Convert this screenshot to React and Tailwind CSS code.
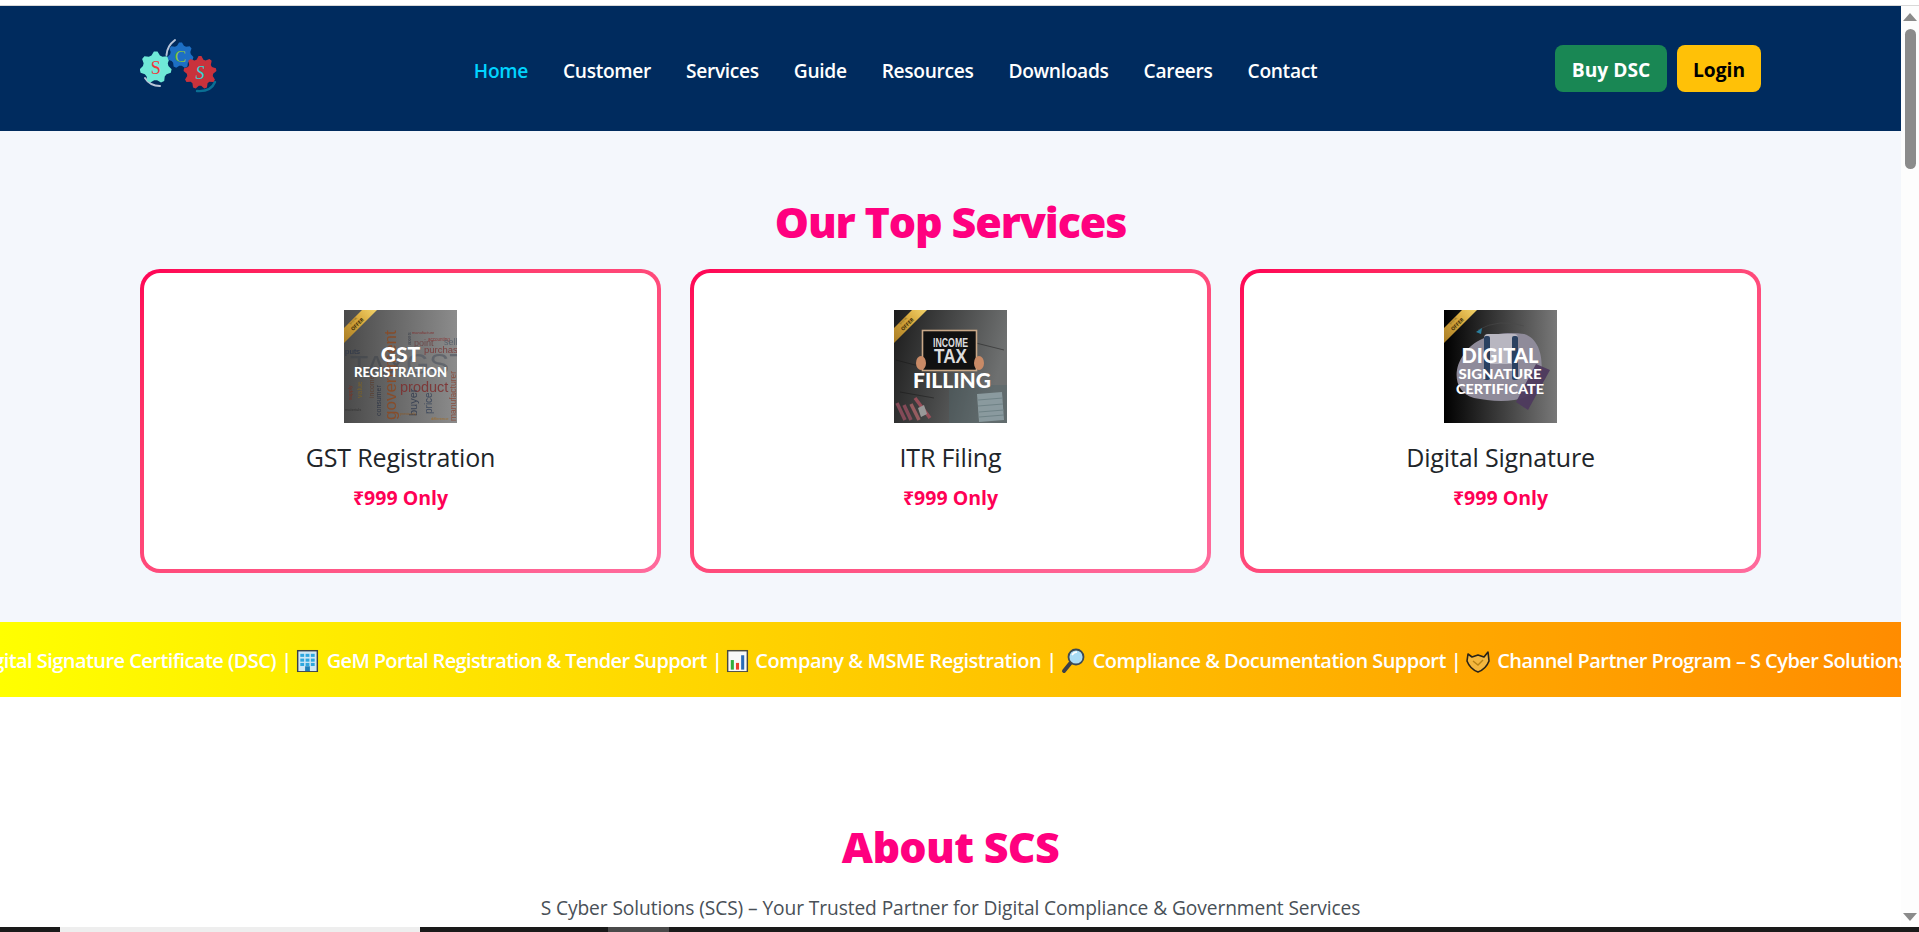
import React from "react";

const NAV = ["Home", "Customer", "Services", "Guide", "Resources", "Downloads", "Careers", "Contact"];
const UI = "font-['Open_Sans','Noto_Sans',sans-serif]";

function gear(cx, cy, r, teeth) {
  const pts = [];
  const steps = teeth * 4;
  for (let i = 0; i < steps; i++) {
    const a = (i / steps) * Math.PI * 2 - Math.PI / 2 - Math.PI / steps;
    const rad = i % 4 === 0 || i % 4 === 1 ? r : r * 0.8;
    pts.push(`${(cx + rad * Math.cos(a)).toFixed(2)},${(cy + rad * Math.sin(a)).toFixed(2)}`);
  }
  return pts.join(" ");
}

function Logo() {
  return (
    <svg viewBox="0 0 96 80" className="w-[96px] h-[80px] shrink-0">
      <path d="M35 11 Q27 17 26.5 26" fill="none" stroke="#b9c5d9" strokeWidth="2" strokeLinecap="round" />
      <path d="M5 49 Q10 57 20 57" fill="none" stroke="#b9c5d9" strokeWidth="2" strokeLinecap="round" />
      <path d="M57 62 Q71 63 75 53" fill="none" stroke="#0a6f94" strokeWidth="2.4" strokeLinecap="round" />
      <polygon points={gear(15.7, 38.5, 16, 7)} fill="#6fe9d7" />
      <polygon points={gear(40.5, 26.5, 13, 7)} fill="#1d6fc4" />
      <polygon points={gear(60, 43.5, 16.5, 9)} fill="#c9323c" />
      <text x="15.7" y="44.5" textAnchor="middle" fontSize="18" fill="#f0383c" fontFamily="Liberation Serif, serif">S</text>
      <text x="40.5" y="32.5" textAnchor="middle" fontSize="17" fill="#86c440" fontFamily="Liberation Serif, serif">C</text>
      <text x="60" y="50" textAnchor="middle" fontSize="18" fontStyle="italic" fill="#35d2d2" fontFamily="Liberation Serif, serif">S</text>
    </svg>
  );
}

function Ribbon({ id }) {
  return (
    <g>
      <defs>
        <linearGradient id={id} x1="0" y1="1" x2="1" y2="0">
          <stop offset="0" stopColor="#a87c24" />
          <stop offset="0.6" stopColor="#d9aa3e" />
          <stop offset="1" stopColor="#f2d36c" />
        </linearGradient>
      </defs>
      <polygon points="0,18 18,0 33,0 0,33" fill={`url(#${id})`} />
      <text transform="translate(14.5 15.5) rotate(-45)" textAnchor="middle" fontSize="5" fontWeight="700" fill="#3a2c08" fontFamily="Open Sans, sans-serif">OFFER</text>
      <text transform="translate(10 11.5) rotate(-45)" textAnchor="middle" fontSize="2.6" fill="#5a4510" fontFamily="Open Sans, sans-serif">SPECIAL</text>
    </g>
  );
}

function GstPic() {
  const words = [
    ["government", 52, 110, 17, "#8b4a24", -90],
    ["product", 56, 82, 14.5, "#7d3232", 0],
    ["purchase", 80, 43, 9.5, "#7a3a3a", 0],
    ["point", 70, 36, 9, "#6c4545", 0],
    ["puts", 1, 44, 8, "#2a3448", 0],
    ["buyer", 73, 106, 11, "#333c50", -90],
    ["price", 88, 104, 10, "#38445a", -90],
    ["manufacturer", 112, 111, 8.5, "#8a4a3a", -90],
    ["consumer", 37, 106, 7, "#2b3344", -90],
    ["income", 30, 88, 7, "#5b3d2d", -90],
    ["value", 18, 88, 7, "#7d6428", -90],
    ["supply", 8, 90, 5, "#7d3020", -90],
    ["accounting", 84, 31, 4.5, "#8a3030", 0],
    ["manufacture", 68, 24, 4, "#802d2d", 0],
    ["sell", 100, 35, 9, "#555e6a", 0],
    ["axes", 67, 35, 6, "#3a3f4a", -90],
    ["previously", 56, 105, 3.6, "#8d5a24", 0],
    ["difference", 87, 110, 4, "#a06a24", 0],
    ["materials", 1, 101, 4, "#333", 0],
  ];
  return (
    <svg viewBox="0 0 113 113" className="w-[113px] h-[113px] block">
      <defs>
        <linearGradient id="g1" x1="0" x2="1" y1="0" y2="0">
          <stop offset="0" stopColor="#4a4a4a" />
          <stop offset="1" stopColor="#8c8c8c" />
        </linearGradient>
      </defs>
      <rect width="113" height="113" fill="url(#g1)" />
      <g className="blur-[0.4px]" fontFamily="Liberation Sans, sans-serif">
        <text x="6" y="66" fontSize="30" fill="#3f444c" opacity="0.55">TAX</text>
        <text x="62" y="64" fontSize="30" fill="#555b64" opacity="0.7">GST</text>
        {words.map(([w, x, y, s, c, r]) => (
          <text key={w} x={x} y={y} fontSize={s} fill={c} opacity="0.9" transform={r ? `rotate(${r} ${x} ${y})` : undefined}>{w}</text>
        ))}
      </g>
      <Ribbon id="r1" />
      <g fill="#fff" fontFamily="Lato, sans-serif" fontWeight="900" textAnchor="middle">
        <text x="56.5" y="52" fontSize="21">GST</text>
        <text x="56.5" y="67" fontSize="14" textLength="93" lengthAdjust="spacingAndGlyphs">REGISTRATION</text>
      </g>
    </svg>
  );
}

function ItrPic() {
  return (
    <svg viewBox="0 0 113 113" className="w-[113px] h-[113px] block">
      <defs>
        <linearGradient id="g2" x1="0" x2="1" y1="0" y2="0.25">
          <stop offset="0" stopColor="#1c1c1c" />
          <stop offset="1" stopColor="#6e7070" />
        </linearGradient>
      </defs>
      <rect width="113" height="113" fill="url(#g2)" />
      <rect x="55" y="75" width="58" height="38" fill="#4e6468" opacity="0.4" />
      <g stroke="#141414" strokeWidth="1" opacity="0.45">
        <path d="M2 50 L40 60" />
        <path d="M6 82 L40 88" />
        <path d="M70 30 L110 40" />
      </g>
      <Ribbon id="r2" />
      <rect x="28.5" y="20.5" width="54" height="40" fill="#111" stroke="#c9a888" strokeWidth="1.6" />
      <ellipse cx="27" cy="53" rx="5" ry="7" fill="#c98a66" />
      <ellipse cx="85" cy="53" rx="5" ry="7" fill="#c98a66" />
      <g fill="#ddd" fontFamily="Liberation Sans, sans-serif" fontWeight="700" textAnchor="middle">
        <text x="56.5" y="37" fontSize="12" textLength="35" lengthAdjust="spacingAndGlyphs">INCOME</text>
        <text x="56.5" y="53" fontSize="19.5" textLength="33" lengthAdjust="spacingAndGlyphs">TAX</text>
      </g>
      <text x="58" y="78" fill="#fff" textAnchor="middle" fontSize="21" fontWeight="900" fontFamily="Lato, sans-serif" textLength="78" lengthAdjust="spacingAndGlyphs">FILLING</text>
      <g strokeWidth="3.5" opacity="0.9">
        <path d="M3 93 L11 110" stroke="#8d4d5c" />
        <path d="M10 95 L17 110" stroke="#8d4d5c" />
        <path d="M17 94 L25 110" stroke="#a06064" />
        <path d="M21 88 L36 108" stroke="#a0505c" />
      </g>
      <polygon points="24,98 30,95 33,104 27,107" fill="#999" />
      <polygon points="83,84 108,82 110,110 85,112" fill="#8fa0a4" opacity="0.9" />
      <g stroke="#6f8286" strokeWidth="1">
        <path d="M84 90 L109 88" />
        <path d="M84 96 L109 94" />
        <path d="M85 102 L110 100" />
        <path d="M85 107 L110 105" />
      </g>
    </svg>
  );
}

function DscPic() {
  return (
    <svg viewBox="0 0 113 113" className="w-[113px] h-[113px] block">
      <defs>
        <linearGradient id="g3" x1="0" x2="1" y1="0" y2="0">
          <stop offset="0" stopColor="#000" />
          <stop offset="1" stopColor="#787878" />
        </linearGradient>
      </defs>
      <rect width="113" height="113" fill="url(#g3)" />
      <path d="M20 44 C30 28 55 20 80 24 C100 30 100 60 95 75 C85 95 50 92 30 88 C10 82 8 60 20 44 Z" fill="#8f8b9a" />
      <rect x="40" y="24" width="34" height="30" rx="4" fill="#b8b6c0" />
      <rect x="40" y="26" width="6" height="44" rx="2" fill="#2a4060" />
      <rect x="68" y="26" width="6" height="44" rx="2" fill="#2a4060" />
      <path d="M72 92 L92 54 L106 60 L84 100 Z" fill="#4e3a5e" opacity="0.95" />
      <path d="M34 20 Q55 8 80 16" stroke="#4a4a4a" fill="none" strokeWidth="0.6" />
      <polygon points="32,22 38,18 37,24" fill="#2b7f9e" />
      <Ribbon id="r3" />
      <g fill="#fff" fontFamily="Lato, sans-serif" fontWeight="900" textAnchor="middle">
        <text x="56" y="53" fontSize="21" textLength="77" lengthAdjust="spacingAndGlyphs">DIGITAL</text>
        <text x="56" y="69" fontSize="14" textLength="83" lengthAdjust="spacingAndGlyphs">SIGNATURE</text>
        <text x="56" y="84" fontSize="14" textLength="88" lengthAdjust="spacingAndGlyphs">CERTIFICATE</text>
      </g>
    </svg>
  );
}

function Building() {
  return (
    <svg viewBox="0 0 24 24" className="w-[23px] h-[24px] shrink-0">
      <rect x="1" y="0.5" width="22" height="23" fill="#3a4048" />
      <rect x="2.5" y="2" width="19" height="20.5" fill="#cfe8f5" />
      {[4.5, 9.5, 14].map((y) => [4.5, 10, 15.5].map((x) => <rect key={`${x}-${y}`} x={x} y={y} width="4" height="3.2" fill="#2fa7de" />))}
      <rect x="9.5" y="17.5" width="5" height="5" fill="#1f7fb8" />
    </svg>
  );
}

function Chart() {
  return (
    <svg viewBox="0 0 24 24" className="w-[23px] h-[24px] shrink-0">
      <rect x="1" y="0.5" width="22" height="23" fill="#4a4a40" />
      <rect x="2.5" y="2" width="19" height="20.5" fill="#f8f8f8" />
      <rect x="5" y="11" width="3.2" height="10" fill="#2fae3c" />
      <rect x="10.4" y="14" width="3.2" height="7" fill="#e8402c" />
      <rect x="15.8" y="6" width="3.2" height="15" fill="#2a6bb5" />
    </svg>
  );
}

function Magnifier() {
  return (
    <svg viewBox="0 0 24 26" className="w-[24px] h-[26px] shrink-0">
      <path d="M9.5 15 L3 23" stroke="#3c4048" strokeWidth="4" strokeLinecap="round" />
      <circle cx="15" cy="9" r="7.5" fill="#a9dcf5" stroke="#3c4a55" strokeWidth="1.8" />
      <path d="M11 7 Q13 4 16 4" stroke="#fff" strokeWidth="1.5" fill="none" />
    </svg>
  );
}

function Handshake() {
  return (
    <svg viewBox="0 0 26 26" className="w-[26px] h-[26px] shrink-0">
      <path d="M3 6 L7 9 L13 7 L19 9 L23 4 L24 13 Q21 21 13 24 Q5 21 2 13 Z" fill="#f4b73e" stroke="#2a2418" strokeWidth="1.6" strokeLinejoin="round" />
      <path d="M8 13 L13 17 L18 12" fill="none" stroke="#b98415" strokeWidth="1.4" />
    </svg>
  );
}

function ServiceCard({ title, children }) {
  return (
    <div className="h-[304px] rounded-[20px] p-[4px] bg-gradient-to-br from-[#ff0055] to-[#ff6b9d]">
      <div className="h-full rounded-[16px] bg-white flex flex-col items-center pt-[37px]">
        <div className="w-[113px] h-[113px]">{children}</div>
        <h3 className="mt-[18px] text-[25px] leading-[32px] font-medium text-[#212529] tracking-[-0.15px]">{title}</h3>
        <p className="mt-[12px] text-[19.5px] leading-[26px] font-bold text-[#ff0055]">₹999 Only</p>
      </div>
    </div>
  );
}

function Sep() {
  return <span className="ml-[5px] mr-[4px]">|</span>;
}

export default function App() {
  return (
    <div className={`h-[932px] w-full overflow-hidden flex flex-col bg-white ${UI}`}>
      <div className="h-[6px] bg-white border-b border-[#d8d8d8] shrink-0" />
      <div className="flex flex-1 min-h-0">
        <main className="flex-1 min-w-0 overflow-hidden">
          <header className="h-[125px] bg-[#002b5e] px-[140px] flex items-center justify-between">
            <Logo />
            <nav className="flex items-center gap-[35px] pt-[6px]">
              {NAV.map((n, i) => (
                <a key={n} className={`text-[19.2px] font-semibold tracking-[-0.33px] whitespace-nowrap ${i === 0 ? "text-[#00d4ff]" : "text-white"}`}>{n}</a>
              ))}
            </nav>
            <div className="flex items-center gap-[10px] w-[206px]">
              <button className="h-[47px] w-[112px] pt-[4px] rounded-lg bg-[#198754] text-white font-bold text-[19.2px]">Buy DSC</button>
              <button className="h-[47px] w-[84px] pt-[4px] rounded-lg bg-[#ffc107] text-black font-bold text-[19.2px]">Login</button>
            </div>
          </header>

          <section className="bg-[#f4f7fc] px-[140px] pt-[67px] pb-[49px]">
            <h2 className="text-center text-[43px] leading-[48px] font-extrabold text-[#ff007f] tracking-[-1.15px] mb-[23px]">Our Top Services</h2>
            <div className="grid grid-cols-3 gap-[29px]">
              <ServiceCard title="GST Registration"><GstPic /></ServiceCard>
              <ServiceCard title="ITR Filing"><ItrPic /></ServiceCard>
              <ServiceCard title="Digital Signature"><DscPic /></ServiceCard>
            </div>
          </section>

          <div className="h-[75px] overflow-hidden bg-gradient-to-r from-[#ffff00] to-[#ff8c00] flex items-center pt-[2px] text-white font-semibold text-[20px] tracking-[-0.55px] whitespace-nowrap">
            <div className="flex items-center -ml-[26px]">
              <span>Digital Signature Certificate (DSC)</span>
              <Sep />
              <Building />
              <span className="ml-[8px] tracking-[-0.65px]">GeM Portal Registration &amp; Tender Support</span>
              <Sep />
              <Chart />
              <span className="ml-[6px] tracking-[-0.45px]">Company &amp; MSME Registration</span>
              <Sep />
              <Magnifier />
              <span className="ml-[8px]">Compliance &amp; Documentation Support</span>
              <Sep />
              <Handshake />
              <span className="ml-[6px]">Channel Partner Program – S Cyber Solutions</span>
            </div>
          </div>

          <section className="bg-white pt-[126px] text-center">
            <h2 className="text-[43px] leading-[48px] font-extrabold text-[#ff007f] tracking-[-0.7px]">About SCS</h2>
            <p className="mt-[23px] text-[19.2px] leading-[27px] text-[#495057] tracking-[-0.1px]">S Cyber Solutions (SCS) – Your Trusted Partner for Digital Compliance &amp; Government Services</p>
          </section>
        </main>

        <aside className="w-[18px] shrink-0 bg-[#fdfdfd] flex flex-col items-center justify-between pt-[7px] pb-[6px]">
          <div className="flex flex-col items-center">
            <svg viewBox="0 0 14 8" className="w-[14px] h-[8px]"><polygon points="7,0 14,8 0,8" fill="#8a8a8a" /></svg>
            <div className="mt-[8px] w-[11px] h-[140px] rounded-full bg-[#8b8b8b]" />
          </div>
          <svg viewBox="0 0 14 8" className="w-[14px] h-[8px]"><polygon points="0,0 14,0 7,8" fill="#8a8a8a" /></svg>
        </aside>
      </div>
      <div className="h-[5px] shrink-0 bg-[#1a1a1a] flex">
        <div className="ml-[60px] w-[360px] bg-[#eeeeee]" />
        <div className="ml-[188px] w-[61px] bg-[#4a4a4a]" />
      </div>
    </div>
  );
}
